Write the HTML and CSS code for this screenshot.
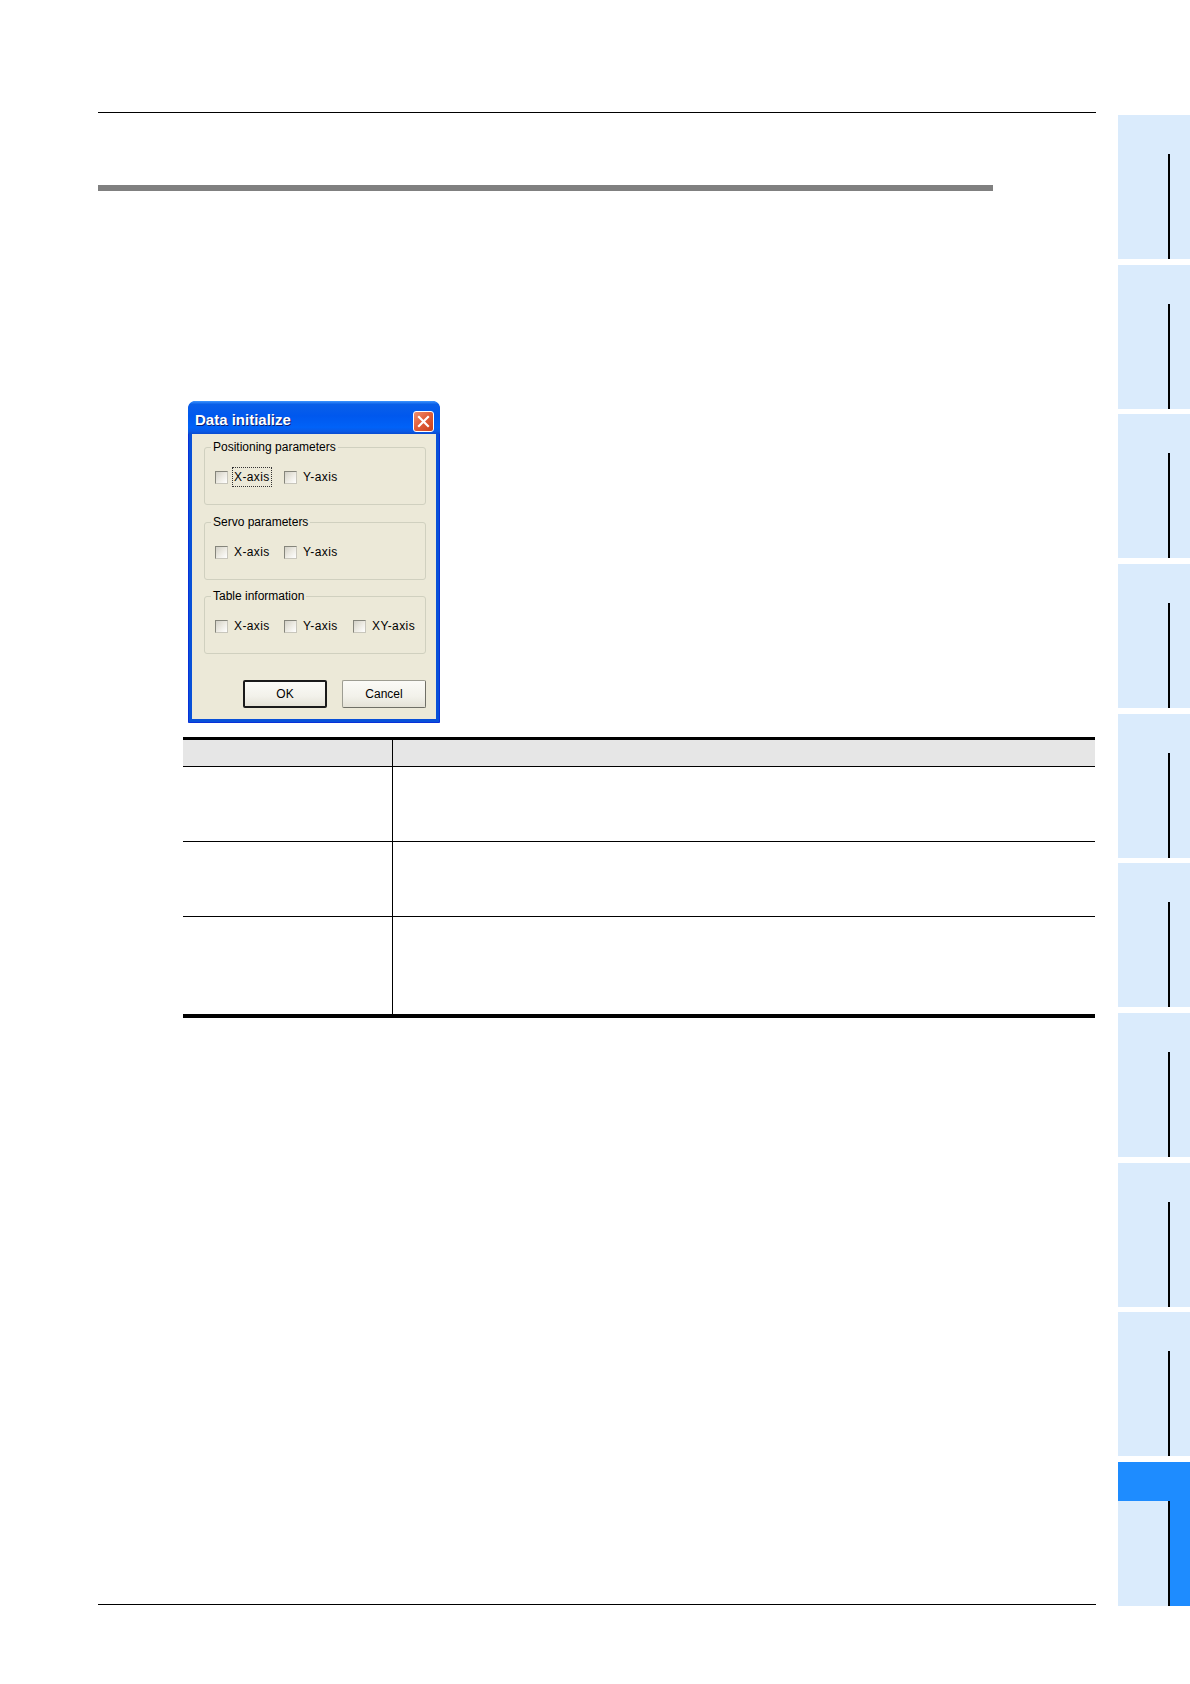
FILE: index.html
```html
<!DOCTYPE html>
<html>
<head>
<meta charset="utf-8">
<link rel="stylesheet" href="styles.css">
</head>
<body>
<div class="page">
  <div class="main">
    <div class="top-rule"></div>
    <div class="section-bar"></div>

    <div class="dialog">
      <div class="titlebar">
        <span class="title">Data initialize</span>
        <span class="close-btn">
          <svg width="13" height="13" viewBox="0 0 13 13"><path d="M2 2 L11 11 M11 2 L2 11" stroke="#fff" stroke-width="2.2" stroke-linecap="square"/></svg>
        </span>
      </div>
      <div class="dialog-body">
        <div class="group g1">
          <span class="group-label">Positioning parameters</span>
          <div class="cb-row">
            <div class="cb-item"><span class="cb"></span><span class="cb-text focus">X-axis</span></div>
            <div class="cb-item"><span class="cb"></span><span class="cb-text">Y-axis</span></div>
          </div>
        </div>
        <div class="group g2">
          <span class="group-label">Servo parameters</span>
          <div class="cb-row">
            <div class="cb-item"><span class="cb"></span><span class="cb-text">X-axis</span></div>
            <div class="cb-item"><span class="cb"></span><span class="cb-text">Y-axis</span></div>
          </div>
        </div>
        <div class="group g3">
          <span class="group-label">Table information</span>
          <div class="cb-row">
            <div class="cb-item"><span class="cb"></span><span class="cb-text">X-axis</span></div>
            <div class="cb-item"><span class="cb"></span><span class="cb-text">Y-axis</span></div>
            <div class="cb-item"><span class="cb"></span><span class="cb-text">XY-axis</span></div>
          </div>
        </div>
        <div class="btn-row">
          <span class="btn btn-default">OK</span>
          <span class="btn">Cancel</span>
        </div>
      </div>
    </div>

    <table class="info-table">
      <tr class="head"><td class="c1"></td><td class="c2"></td></tr>
      <tr class="r1"><td class="c1"></td><td class="c2"></td></tr>
      <tr class="r2"><td class="c1"></td><td class="c2"></td></tr>
      <tr class="r3"><td class="c1"></td><td class="c2"></td></tr>
    </table>

    <div class="bottom-rule"></div>
  </div>

  <div class="sidebar">
    <div class="tab"><div class="tab-top"></div><div class="tab-bottom"><div class="tab-left"></div><div class="tab-right"></div></div></div>
    <div class="tab"><div class="tab-top"></div><div class="tab-bottom"><div class="tab-left"></div><div class="tab-right"></div></div></div>
    <div class="tab"><div class="tab-top"></div><div class="tab-bottom"><div class="tab-left"></div><div class="tab-right"></div></div></div>
    <div class="tab"><div class="tab-top"></div><div class="tab-bottom"><div class="tab-left"></div><div class="tab-right"></div></div></div>
    <div class="tab"><div class="tab-top"></div><div class="tab-bottom"><div class="tab-left"></div><div class="tab-right"></div></div></div>
    <div class="tab"><div class="tab-top"></div><div class="tab-bottom"><div class="tab-left"></div><div class="tab-right"></div></div></div>
    <div class="tab"><div class="tab-top"></div><div class="tab-bottom"><div class="tab-left"></div><div class="tab-right"></div></div></div>
    <div class="tab"><div class="tab-top"></div><div class="tab-bottom"><div class="tab-left"></div><div class="tab-right"></div></div></div>
    <div class="tab"><div class="tab-top"></div><div class="tab-bottom"><div class="tab-left"></div><div class="tab-right"></div></div></div>
    <div class="tab active"><div class="tab-top"></div><div class="tab-bottom"><div class="tab-left"></div><div class="tab-right"></div></div></div>
  </div>
</div>
</body>
</html>
```

FILE: styles.css
```css
html, body {
  margin: 0;
  padding: 0;
  background: #ffffff;
}

body {
  font-family: "Liberation Sans", Arial, sans-serif;
  color: #000;
}

.page {
  width: 1190px;
  height: 1684px;
  display: flex;
  flex-direction: row;
  overflow: hidden;
}

.main {
  width: 998px;
  margin-left: 98px;
  padding-top: 112px;
  box-sizing: border-box;
}

.top-rule {
  height: 0;
  border-top: 1.5px solid #000;
}

.section-bar {
  margin-top: 72px;
  width: 895px;
  height: 6px;
  background: #808080;
}

/* ---------- dialog ---------- */
.dialog {
  margin-top: 210px;
  margin-left: 90px;
  width: 252px;
  height: 322px;
  box-sizing: border-box;
  background: #0850d8;
  border: 1px solid #0831d9;
  border-radius: 8px 8px 0 0;
  padding: 0 3px 3px 3px;
  display: flex;
  flex-direction: column;
}

.titlebar {
  margin: -1px -4px 0 -4px;
  height: 33px;
  box-sizing: border-box;
  border-radius: 7px 7px 0 0;
  background: linear-gradient(to bottom, #3d95ff 0%, #0a5fe8 10%, #0058ee 45%, #0062f8 80%, #0a5ae6 92%, #0a4bd0 100%);
  display: flex;
  align-items: center;
  padding: 4px 6px 0 7px;
}

.title {
  flex: 1;
  color: #fff;
  font-weight: bold;
  font-size: 15px;
  letter-spacing: 0;
  text-shadow: 1px 1px 0 #0a1f73;
}

.close-btn {
  align-self: flex-start;
  margin-top: 6px;
  width: 21px;
  height: 21px;
  box-sizing: border-box;
  border: 1px solid #fff;
  border-radius: 3px;
  background: linear-gradient(135deg, #f09070 0%, #e2603c 45%, #c8401c 100%);
  display: flex;
  align-items: center;
  justify-content: center;
}

.dialog-body {
  flex: 1;
  background: #ece9d8;
  display: flex;
  flex-direction: column;
  padding: 0 10px 0 12px;
  font-size: 12px;
}

.group {
  position: relative;
  height: 58px;
  box-sizing: border-box;
  border: 1px solid #d0d0bf;
  border-radius: 3px;
  padding: 22px 0 0 10px;
}

.g1 { margin-top: 13px; }
.g2 { margin-top: 17px; }
.g3 { margin-top: 16px; }

.group-label {
  position: absolute;
  top: -8px;
  left: 6px;
  padding: 0 2px;
  background: #ece9d8;
  line-height: 14px;
  white-space: nowrap;
}

.cb-row {
  display: flex;
}

.cb-item {
  width: 69px;
  display: flex;
  align-items: center;
  height: 14px;
}

.cb {
  width: 13px;
  height: 13px;
  box-sizing: border-box;
  border: 1px solid #85857b;
  border-right-color: #c8c6bc;
  border-bottom-color: #c8c6bc;
  background: linear-gradient(135deg, #d2d0c6 0%, #eceae2 50%, #ffffff 100%);
  flex: none;
}

.cb-text {
  margin-left: 4px;
  padding: 0 1px;
  line-height: 14px;
  letter-spacing: 0.4px;
  border: 1px solid transparent;
}

.cb-text.focus {
  border: 1px dotted #333;
  padding: 2px 1px;
}

.btn-row {
  margin-top: 26px;
  display: flex;
  justify-content: flex-end;
  gap: 15px;
}

.btn {
  width: 84px;
  height: 28px;
  box-sizing: border-box;
  display: flex;
  align-items: center;
  justify-content: center;
  font-size: 12px;
  background: linear-gradient(to bottom, #fbfbf7 0%, #f2f1ea 60%, #e4e2d6 100%);
  border: 1px solid #9d9d92;
  border-right-color: #6f6f66;
  border-bottom-color: #6f6f66;
  border-radius: 2px;
}

.btn-default {
  border: 2px solid #1a1a1a;
}

/* ---------- table ---------- */
.info-table {
  margin-top: 14px;
  margin-left: 85px;
  width: 912px;
  border-collapse: collapse;
  border-top: 3px solid #000;
  border-bottom: 4px solid #000;
}

.info-table td {
  padding: 0;
  border-bottom: 1px solid #000;
}

.info-table td.c1 {
  width: 209px;
  border-right: 1px solid #000;
}

.info-table tr.head td {
  height: 26px;
  background: #e6e6e6;
}

.info-table tr.r1 td,
.info-table tr.r2 td {
  height: 74px;
}

.info-table tr.r3 td {
  height: 97px;
  border-bottom: none;
}

.bottom-rule {
  margin-top: 586px;
  height: 0;
  border-top: 1.5px solid #000;
}

/* ---------- sidebar tabs ---------- */
.sidebar {
  margin-left: 22px;
  width: 72px;
  padding-top: 115px;
  display: flex;
  flex-direction: column;
  gap: 5.67px;
}

.tab {
  height: 144px;
  display: flex;
  flex-direction: column;
}

.tab-top {
  height: 39px;
  background: #daebfc;
}

.tab-bottom {
  flex: 1;
  display: flex;
}

.tab-left {
  width: 50px;
  background: #daebfc;
  border-right: 2px solid #000;
}

.tab-right {
  flex: 1;
  background: #daebfc;
}

.tab.active .tab-top,
.tab.active .tab-right {
  background: #1e8cff;
}
```
